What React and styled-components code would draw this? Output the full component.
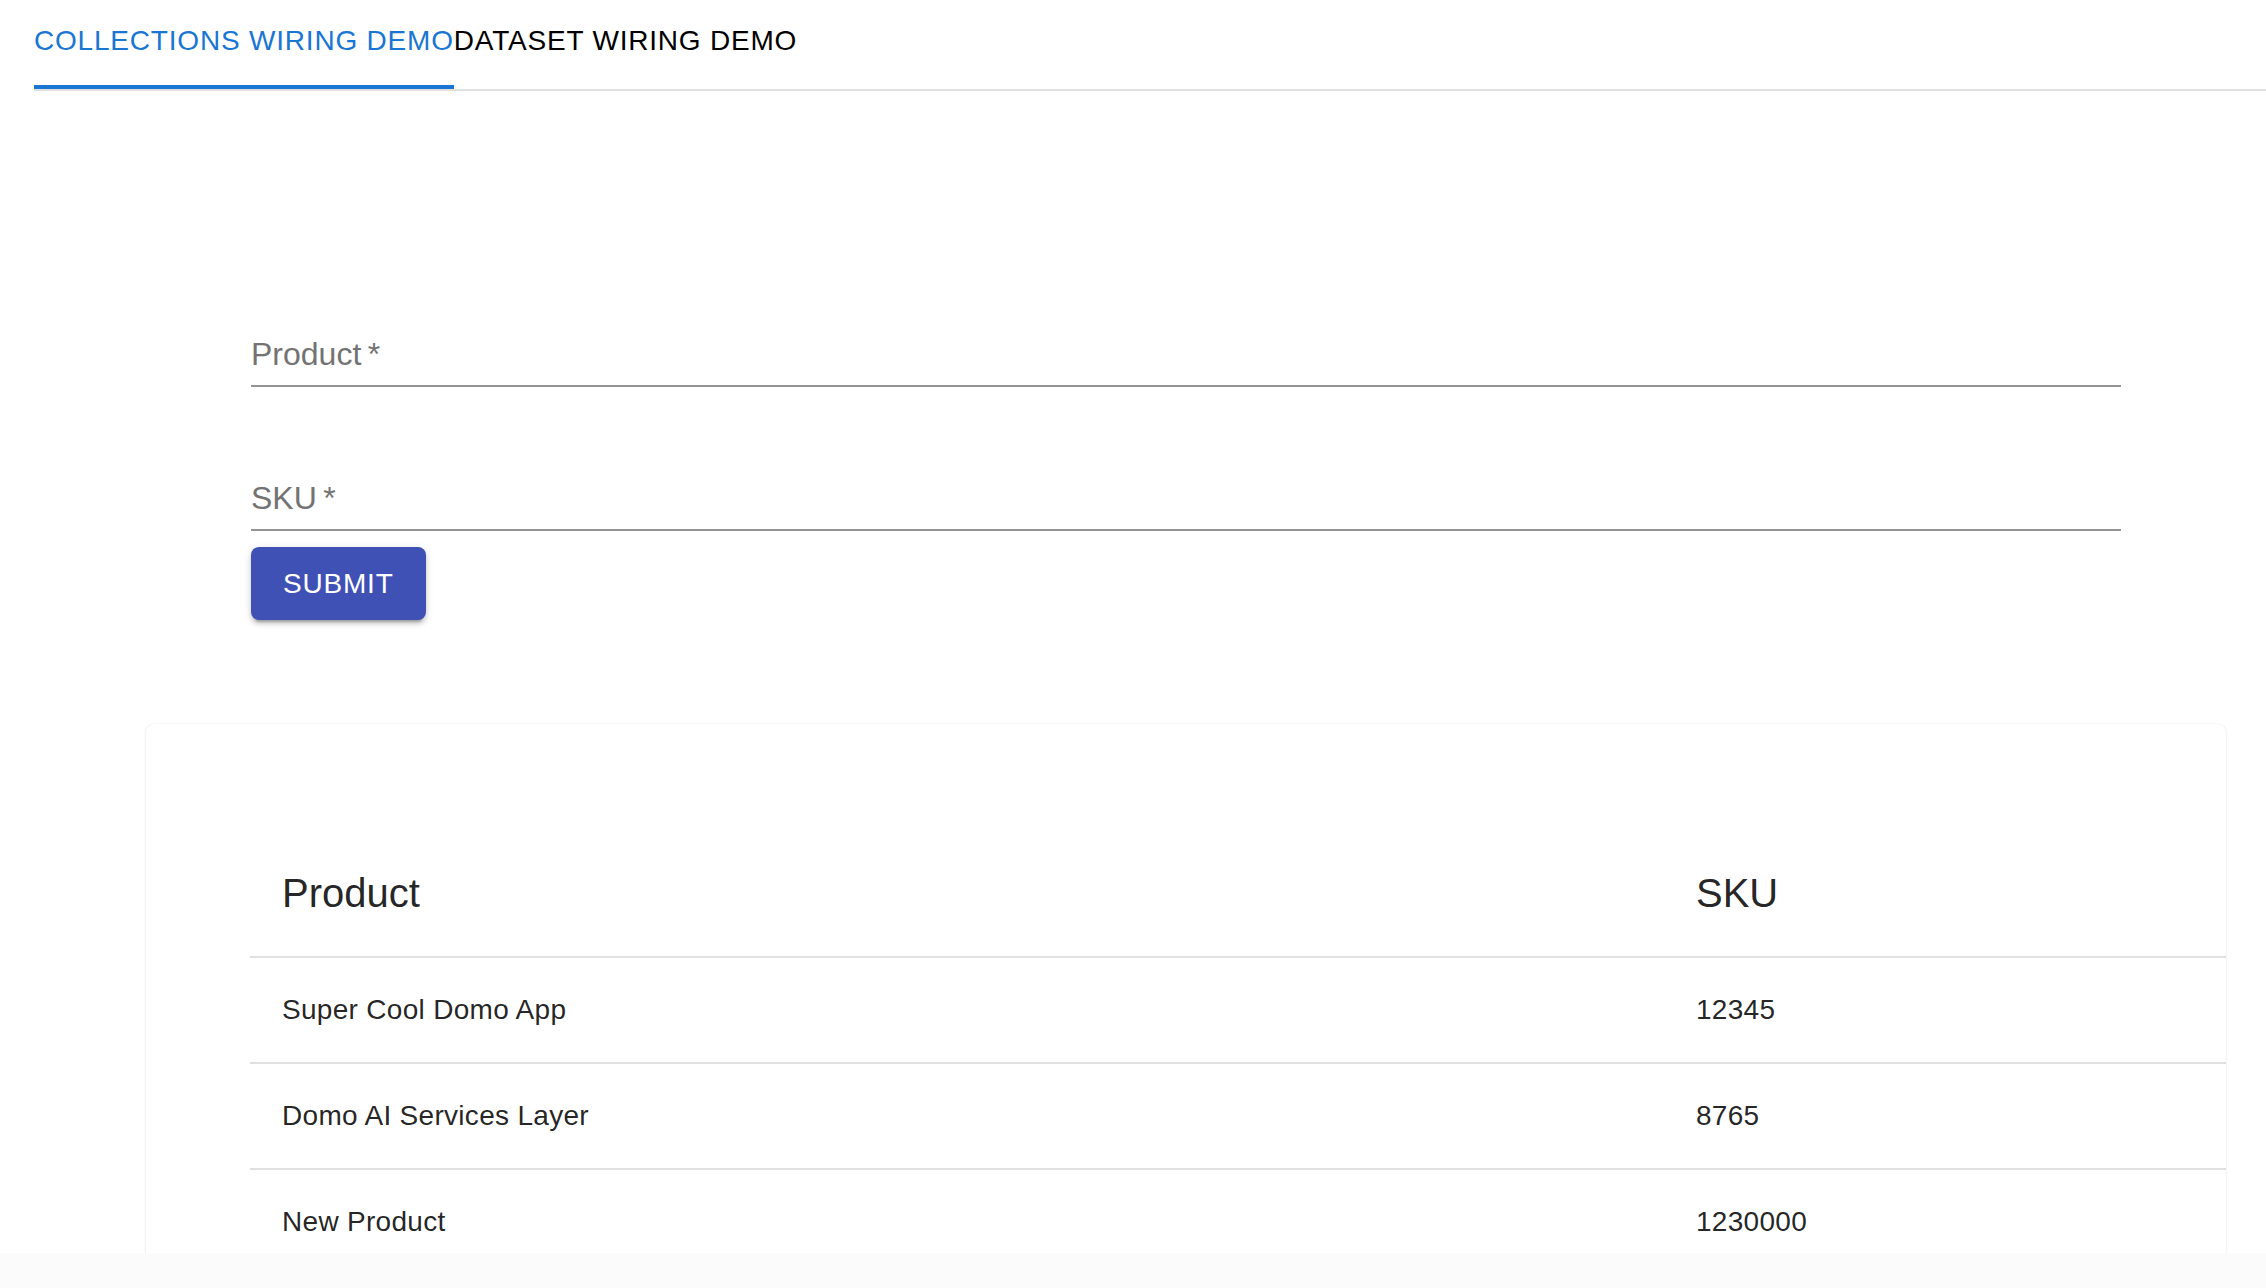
import React from "react";
import styled, { createGlobalStyle } from "styled-components";

const GlobalStyle = createGlobalStyle`
  html, body {
    margin: 0;
    padding: 0;
    background: #fbfbfb;
  }
  body {
    font-family: "Liberation Sans", Arial, Helvetica, sans-serif;
    -webkit-font-smoothing: antialiased;
  }
  * { box-sizing: border-box; }
`;

const Page = styled.div`
  height: 1253px;
  overflow: hidden;
  background: #ffffff;
`;

const TabBar = styled.div`
  display: flex;
  margin-left: 34px;
  border-bottom: 2px solid #e0e0e0;
`;

const Tab = styled.button`
  position: relative;
  border: 0;
  background: transparent;
  margin: 0;
  padding: 23px 0 31px;
  font-family: "Liberation Sans", Arial, Helvetica, sans-serif;
  font-size: 28px;
  line-height: 35px;
  letter-spacing: 0.8px;
  text-transform: uppercase;
  color: ${(p) => (p.$active ? "#1976d2" : "#000000")};
  cursor: pointer;
`;

const Indicator = styled.span`
  position: absolute;
  left: 0;
  right: 0;
  bottom: 0;
  height: 4px;
  background: #1976d2;
`;

const Form = styled.form`
  display: flex;
  flex-direction: column;
  align-items: flex-start;
  padding: 200px 145px 0 251px;
`;

const Field = styled.div`
  position: relative;
  width: 100%;
  margin-bottom: ${(p) => p.$mb || 0}px;
`;

const Label = styled.label`
  position: absolute;
  left: 0;
  top: 40px;
  font-size: 32px;
  line-height: 46px;
  color: #737373;
  pointer-events: none;
`;

const Input = styled.input`
  display: block;
  width: 100%;
  margin-top: 32px;
  padding: 8px 0;
  height: 64px;
  border: 0;
  border-bottom: 2px solid #949494;
  outline: none;
  background: transparent;
  font-family: inherit;
  font-size: 32px;
  line-height: 46px;
  color: rgba(0, 0, 0, 0.87);
`;

const SubmitButton = styled.button`
  height: 73px;
  padding: 0 32px;
  border: 0;
  border-radius: 8px;
  background: #3f51b5;
  color: #ffffff;
  font-family: inherit;
  font-size: 28px;
  line-height: 73px;
  letter-spacing: 0.8px;
  text-transform: uppercase;
  box-shadow: 0 6px 2px -4px rgba(0, 0, 0, 0.2), 0 4px 4px 0 rgba(0, 0, 0, 0.14),
    0 2px 10px 0 rgba(0, 0, 0, 0.12);
  cursor: pointer;
`;

const Card = styled.div`
  margin: 104px 40px 0 146px;
  padding: 106px 0 0 104px;
  background: #ffffff;
  border-radius: 8px;
  box-shadow: 0 1px 3px rgba(0, 0, 0, 0.1), 0 0 1px rgba(0, 0, 0, 0.12);
`;

const Table = styled.table`
  width: 100%;
  border-collapse: collapse;
  table-layout: fixed;
`;

const HeadCell = styled.th`
  width: ${(p) => (p.$w ? `${p.$w}px` : "auto")};
  padding: 32px;
  text-align: left;
  font-weight: 400;
  font-size: 40px;
  line-height: 62px;
  color: rgba(0, 0, 0, 0.87);
  border-bottom: 2px solid #e0e0e0;
`;

const Cell = styled.td`
  padding: 32px;
  font-size: 28px;
  line-height: 40px;
  letter-spacing: 0.3px;
  color: rgba(0, 0, 0, 0.87);
  border-bottom: 2px solid #e0e0e0;
`;

const rows = [
  { product: "Super Cool Domo App", sku: "12345" },
  { product: "Domo AI Services Layer", sku: "8765" },
  { product: "New Product", sku: "1230000" },
];

export default function App() {
  return (
    <>
      <GlobalStyle />
      <Page>
        <TabBar>
          <Tab $active>
            Collections Wiring Demo
            <Indicator />
          </Tab>
          <Tab>Dataset Wiring Demo</Tab>
        </TabBar>
        <Form onSubmit={(e) => e.preventDefault()}>
          <Field $mb={48}>
            <Label>Product{"\u2009"}*</Label>
            <Input type="text" />
          </Field>
          <Field $mb={16}>
            <Label>SKU{"\u2009"}*</Label>
            <Input type="text" />
          </Field>
          <SubmitButton type="submit">Submit</SubmitButton>
        </Form>
        <Card>
          <Table>
            <thead>
              <tr>
                <HeadCell $w={1414}>Product</HeadCell>
                <HeadCell>SKU</HeadCell>
              </tr>
            </thead>
            <tbody>
              {rows.map((r) => (
                <tr key={r.product}>
                  <Cell>{r.product}</Cell>
                  <Cell>{r.sku}</Cell>
                </tr>
              ))}
            </tbody>
          </Table>
        </Card>
      </Page>
    </>
  );
}
